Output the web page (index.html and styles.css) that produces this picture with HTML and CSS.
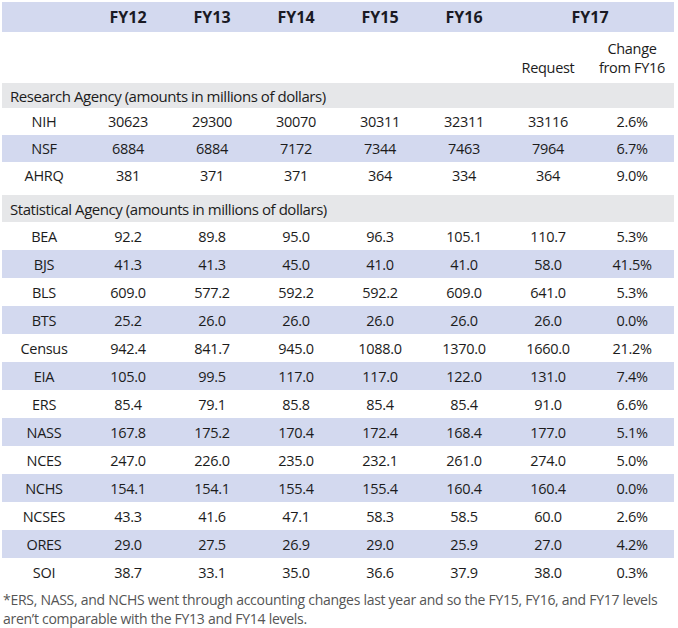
FILE: index.html
```html
<!DOCTYPE html>
<html>
<head>
<meta charset="utf-8">
<link rel="stylesheet" href="styles.css">
</head>
<body>
<table class="budget">
  <colgroup>
    <col><col><col><col><col><col><col><col>
  </colgroup>
  <thead>
    <tr class="yr">
      <th></th><th>FY12</th><th>FY13</th><th>FY14</th><th>FY15</th><th>FY16</th><th colspan="2">FY17</th>
    </tr>
    <tr class="sub">
      <th></th><th></th><th></th><th></th><th></th><th></th><th>Request</th><th>Change<br>from FY16</th>
    </tr>
  </thead>
  <tbody class="research">
    <tr class="sec"><td colspan="8">Research Agency (amounts in millions of dollars)</td></tr>
    <tr><td>NIH</td><td>30623</td><td>29300</td><td>30070</td><td>30311</td><td>32311</td><td>33116</td><td>2.6%</td></tr>
    <tr class="alt"><td>NSF</td><td>6884</td><td>6884</td><td>7172</td><td>7344</td><td>7463</td><td>7964</td><td>6.7%</td></tr>
    <tr><td>AHRQ</td><td>381</td><td>371</td><td>371</td><td>364</td><td>334</td><td>364</td><td>9.0%</td></tr>
    <tr class="gap"><td colspan="8"></td></tr>
  </tbody>
  <tbody class="stat">
    <tr class="sec"><td colspan="8">Statistical Agency (amounts in millions of dollars)</td></tr>
    <tr><td>BEA</td><td>92.2</td><td>89.8</td><td>95.0</td><td>96.3</td><td>105.1</td><td>110.7</td><td>5.3%</td></tr>
    <tr class="alt"><td>BJS</td><td>41.3</td><td>41.3</td><td>45.0</td><td>41.0</td><td>41.0</td><td>58.0</td><td>41.5%</td></tr>
    <tr><td>BLS</td><td>609.0</td><td>577.2</td><td>592.2</td><td>592.2</td><td>609.0</td><td>641.0</td><td>5.3%</td></tr>
    <tr class="alt"><td>BTS</td><td>25.2</td><td>26.0</td><td>26.0</td><td>26.0</td><td>26.0</td><td>26.0</td><td>0.0%</td></tr>
    <tr><td>Census</td><td>942.4</td><td>841.7</td><td>945.0</td><td>1088.0</td><td>1370.0</td><td>1660.0</td><td>21.2%</td></tr>
    <tr class="alt"><td>EIA</td><td>105.0</td><td>99.5</td><td>117.0</td><td>117.0</td><td>122.0</td><td>131.0</td><td>7.4%</td></tr>
    <tr><td>ERS</td><td>85.4</td><td>79.1</td><td>85.8</td><td>85.4</td><td>85.4</td><td>91.0</td><td>6.6%</td></tr>
    <tr class="alt"><td>NASS</td><td>167.8</td><td>175.2</td><td>170.4</td><td>172.4</td><td>168.4</td><td>177.0</td><td>5.1%</td></tr>
    <tr><td>NCES</td><td>247.0</td><td>226.0</td><td>235.0</td><td>232.1</td><td>261.0</td><td>274.0</td><td>5.0%</td></tr>
    <tr class="alt"><td>NCHS</td><td>154.1</td><td>154.1</td><td>155.4</td><td>155.4</td><td>160.4</td><td>160.4</td><td>0.0%</td></tr>
    <tr><td>NCSES</td><td>43.3</td><td>41.6</td><td>47.1</td><td>58.3</td><td>58.5</td><td>60.0</td><td>2.6%</td></tr>
    <tr class="alt"><td>ORES</td><td>29.0</td><td>27.5</td><td>26.9</td><td>29.0</td><td>25.9</td><td>27.0</td><td>4.2%</td></tr>
    <tr><td>SOI</td><td>38.7</td><td>33.1</td><td>35.0</td><td>36.6</td><td>37.9</td><td>38.0</td><td>0.3%</td></tr>
  </tbody>
</table>
<p class="note">*ERS, NASS, and NCHS went through accounting changes last year and so the FY15, FY16, and FY17 levels aren’t comparable with the FY13 and FY14 levels.</p>
</body>
</html>
```

FILE: styles.css
```css
html, body {
  margin: 0;
  padding: 0;
  background: #ffffff;
}

body {
  padding: 2px 0 0 2px;
  font-family: "Open Sans", "Noto Sans", sans-serif;
  color: #1c1c1c;
}

.budget {
  width: 672px;
  border-collapse: collapse;
  table-layout: fixed;
  font-size: 14.5px;
  letter-spacing: -0.3px;
}

.budget col {
  width: 84px;
}

.budget th,
.budget td {
  padding: 0;
  text-align: center;
  vertical-align: middle;
}

.yr {
  height: 30px;
  background: #d3d9ef;
}

.yr th {
  font-size: 16px;
  font-weight: 700;
  letter-spacing: 0;
  color: #1a1a24;
}

.sub {
  height: 51px;
}

.sub th {
  font-weight: 400;
  vertical-align: bottom;
  padding-bottom: 6px;
  line-height: 19px;
}

.sec {
  background: #e6e7e9;
}

.sec td {
  text-align: left;
  padding-left: 8px;
  font-size: 15px;
  letter-spacing: -0.45px;
}

.research .sec {
  height: 25px;
}

.research tr {
  height: 27px;
}

.stat .sec {
  height: 27px;
}

.stat tr {
  height: 28px;
}

.research .gap {
  height: 6px;
}

.alt {
  background: #d3d9ef;
}

.note {
  margin: 4px 0 0 1px;
  font-size: 14px;
  line-height: 19px;
  letter-spacing: -0.28px;
  color: #555555;
}
```
